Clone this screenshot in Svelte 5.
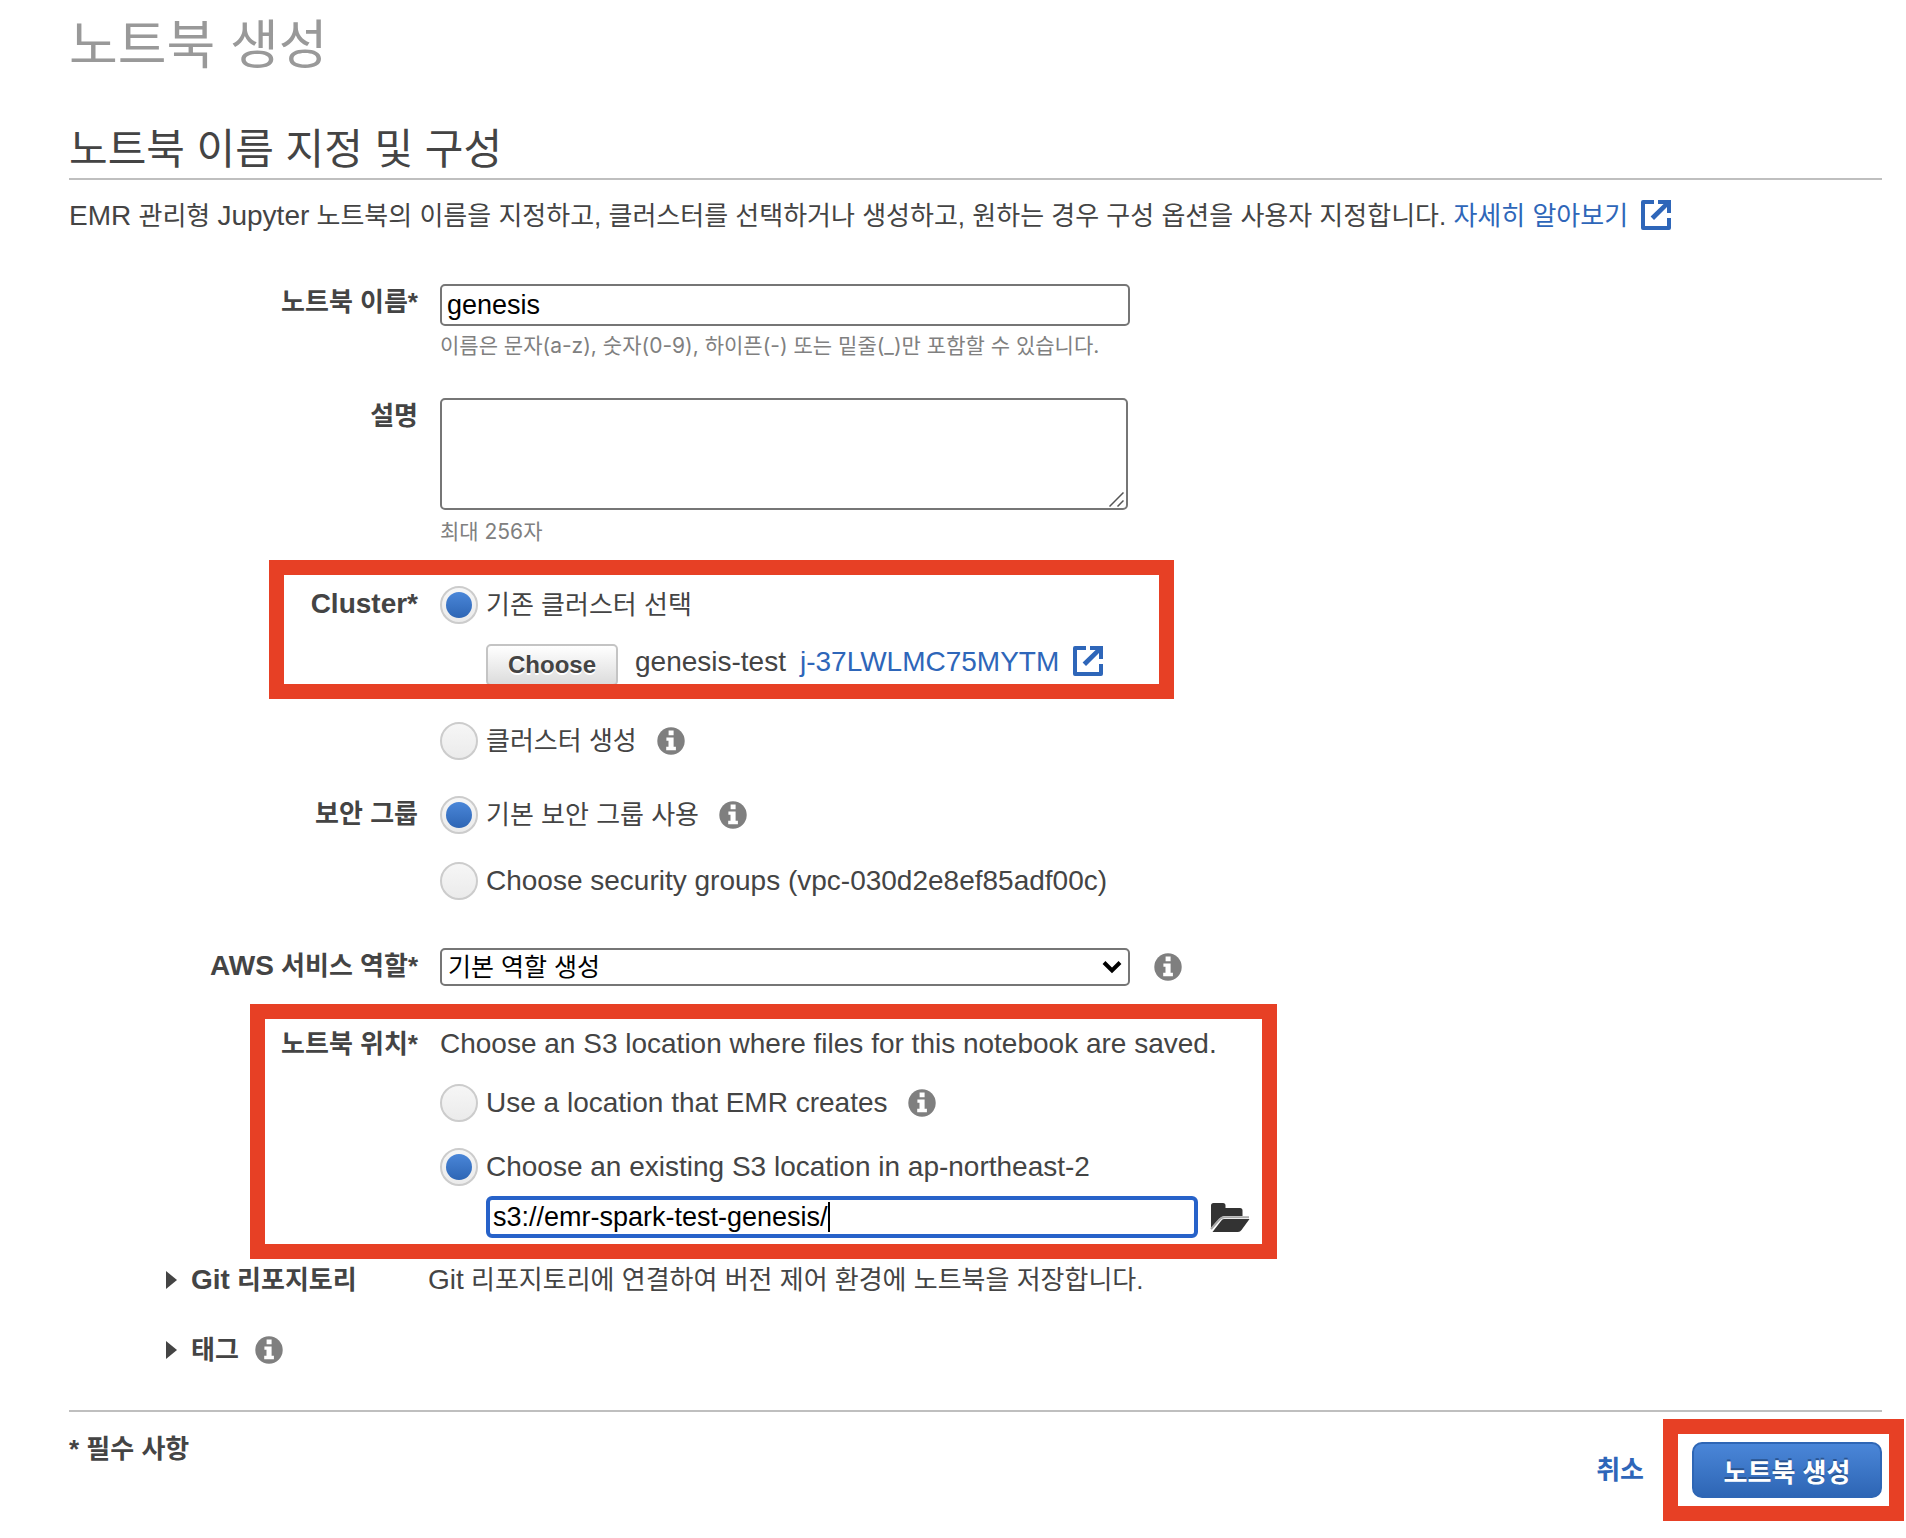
<script>
  let name = $state('genesis');
  let description = $state('');
  let cluster = $state('existing');
  let security = $state('default');
  let role = $state('default');
  let location = $state('existing');
  let s3Path = $state('s3://emr-spark-test-genesis/');
</script>

{#snippet infoIcon()}
  <svg class="info" viewBox="0 0 28 28" role="img" aria-label="정보">
    <circle cx="14" cy="14" r="13.7" fill="#7f7f7f" />
    <path d="M11.6 3.4h5v4.8h-5zM9.4 10.4h7.2v9.4h2.3v3.4H9.2v-3.4h2.3v-6H9.4z" fill="#fff" />
  </svg>
{/snippet}

{#snippet externalIcon()}
  <svg class="external" viewBox="0 0 30 30" aria-hidden="true">
    <path d="M13 2H2v26h26V18" fill="none" stroke="currentColor" stroke-width="4" stroke-linejoin="round" />
    <path d="M17 0h13v13h-4V7L13 20l-3.400-3.400L22.600 4H17z" fill="currentColor" />
  </svg>
{/snippet}

<main class="page">
  <h1>노트북 생성</h1>
  <h2>노트북 이름 지정 및 구성</h2>
  <p class="intro">
    <span class="en">EMR</span> 관리형 <span class="en">Jupyter</span> 노트북의 이름을 지정하고, 클러스터를 선택하거나 생성하고, 원하는 경우 구성 옵션을 사용자 지정합니다.
    <a href="#learn">자세히 알아보기 {@render externalIcon()}</a>
  </p>

  <form onsubmit={(e) => e.preventDefault()}>
    <div class="row name-row">
      <label class="title" for="name">노트북 이름*</label>
      <div class="field">
        <input id="name" class="text" type="text" bind:value={name} />
        <p class="hint">이름은 문자(a-z), 숫자(0-9), 하이픈(-) 또는 밑줄(_)만 포함할 수 있습니다.</p>
      </div>
    </div>

    <div class="row description-row">
      <label class="title" for="description">설명</label>
      <div class="field">
        <div class="area">
          <textarea id="description" bind:value={description}></textarea>
          <svg viewBox="0 0 15 15" aria-hidden="true">
            <path d="M0.500 14.500l14-14M8.500 14.500l6-6" fill="none" stroke="#555" stroke-width="1.500" />
          </svg>
        </div>
        <p class="hint">최대 256자</p>
      </div>
    </div>

    <div class="row cluster-row" role="radiogroup" aria-labelledby="cluster-title">
      <span class="title en" id="cluster-title">Cluster*</span>
      <div class="field">
        <label class="option"><input type="radio" value="existing" bind:group={cluster} />기존 클러스터 선택</label>
        <div class="chosen en">
          <button type="button" class="choose">Choose</button>
          <span>genesis-test</span>
          <a href="#cluster">j-37LWLMC75MYTM {@render externalIcon()}</a>
        </div>
        <label class="option"><input type="radio" value="new" bind:group={cluster} />클러스터 생성 {@render infoIcon()}</label>
      </div>
      <div class="marker cluster-marker"></div>
    </div>

    <div class="row security-row" role="radiogroup" aria-labelledby="security-title">
      <span class="title" id="security-title">보안 그룹</span>
      <div class="field">
        <label class="option"><input type="radio" value="default" bind:group={security} />기본 보안 그룹 사용 {@render infoIcon()}</label>
        <label class="option en"><input type="radio" value="custom" bind:group={security} />Choose security groups (vpc-030d2e8ef85adf00c)</label>
      </div>
    </div>

    <div class="row role-row">
      <label class="title" for="role"><span class="en">AWS</span> 서비스 역할*</label>
      <div class="field inline">
        <div class="select">
          <select id="role" bind:value={role}>
            <option value="default">기본 역할 생성</option>
          </select>
          <svg viewBox="0 0 20 14" aria-hidden="true">
            <path d="M2 2.500l8 8 8-8" fill="none" stroke="#000" stroke-width="4" />
          </svg>
        </div>
        {@render infoIcon()}
      </div>
    </div>

    <div class="row location-row" role="radiogroup" aria-labelledby="location-title">
      <span class="title" id="location-title">노트북 위치*</span>
      <div class="field">
        <p class="lead en">Choose an S3 location where files for this notebook are saved.</p>
        <label class="option en"><input type="radio" value="auto" bind:group={location} />Use a location that EMR creates {@render infoIcon()}</label>
        <label class="option en"><input type="radio" value="existing" bind:group={location} />Choose an existing S3 location in ap-northeast-2</label>
        <div class="path">
          <div class="path-box">
            <input class="text active" type="text" aria-label="S3 location" bind:value={s3Path} />
            <span class="caret"></span>
          </div>
          <button type="button" class="folder" aria-label="찾아보기">
            <svg viewBox="0 0 40 30" aria-hidden="true">
              <path d="M1 26V3.500Q1 1 3.500 1H13q2.500 0 2.500 2.500V6H30q2.500 0 2.500 2.500V14H14.500q-3 0-5 2.500z" fill="#333" />
              <path d="M1 27l8.500-9.500q2-2.300 5-2.300H39" fill="none" stroke="#aaa" stroke-width="2" />
              <path d="M14 17h25.500l-8 11q-1.300 2-3.500 2H2.500l8.500-11q1.200-2 3-2z" fill="#333" />
            </svg>
          </button>
        </div>
      </div>
      <div class="marker location-marker"></div>
    </div>

    <div class="disclosures">
      <div class="disclosure">
        <button type="button" aria-expanded="false"><i></i><span><span class="en">Git</span> 리포지토리</span></button>
        <p><span class="en">Git</span> 리포지토리에 연결하여 버전 제어 환경에 노트북을 저장합니다.</p>
      </div>
      <div class="disclosure">
        <button type="button" aria-expanded="false"><i></i><span>태그</span>{@render infoIcon()}</button>
      </div>
    </div>

    <footer>
      <strong>* 필수 사항</strong>
      <div class="actions">
        <a href="#cancel">취소</a>
        <div class="submit-wrap">
          <button type="submit" class="submit">노트북 생성</button>
          <div class="marker submit-marker"></div>
        </div>
      </div>
    </footer>
  </form>
</main>

<style>
  :global(body) {
    margin: 0;
    background: #fff;
  }
  .page,
  .page * {
    box-sizing: border-box;
  }
  .page {
    padding: 18px 24px 40px 69px;
    font: 26px/36px 'Liberation Sans', 'Noto Sans CJK KR', sans-serif;
    color: #444;
  }
  h1,
  h2,
  p {
    margin: 0;
    font-weight: 400;
  }
  h1 {
    font-size: 53px;
    line-height: 56px;
    color: #999;
  }
  h2 {
    margin-top: 52px;
    padding-bottom: 4px;
    border-bottom: 2px solid #bfbfbf;
    font-size: 42px;
    line-height: 48px;
  }
  .intro {
    margin-top: 18px;
  }
  a {
    color: #2e66b9;
    text-decoration: none;
  }
  .en {
    font-size: 28px;
  }
  button,
  input,
  select,
  textarea {
    margin: 0;
    font-family: inherit;
  }
  svg {
    display: block;
    flex: none;
  }
  .info {
    width: 28px;
    height: 28px;
    margin-left: 12px;
  }
  .external {
    display: inline-block;
    width: 30px;
    height: 30px;
    margin-left: 6px;
    vertical-align: -5px;
  }

  form {
    margin-top: 50px;
  }
  .row {
    position: relative;
    display: grid;
    grid-template-columns: 349px minmax(0, 1fr);
    column-gap: 22px;
  }
  .title {
    font-weight: 700;
    text-align: right;
  }
  .description-row {
    margin-top: 32px;
  }
  .cluster-row {
    margin-top: 34px;
  }
  .security-row {
    margin-top: 36px;
  }
  .role-row {
    margin-top: 48px;
  }
  .location-row {
    margin-top: 40px;
  }

  .text {
    display: block;
    width: 100%;
    max-width: 690px;
    height: 42px;
    padding: 0 5px;
    border: 2px solid #767676;
    border-radius: 5px;
    background: #fff;
    color: #000;
    font-size: 27px;
    outline: none;
  }
  .area {
    position: relative;
    width: fit-content;
    max-width: 100%;
    margin-bottom: 2px;
  }
  textarea {
    display: block;
    width: 688px;
    max-width: 100%;
    height: 112px;
    padding: 4px;
    border: 2px solid #767676;
    border-radius: 5px;
    font-size: 27px;
    resize: both;
  }
  textarea::-webkit-resizer {
    background: transparent;
  }
  .area svg {
    position: absolute;
    right: 4px;
    bottom: 3px;
    width: 15px;
    height: 15px;
    pointer-events: none;
  }
  .hint {
    font-family: Inter, 'Noto Sans CJK KR', sans-serif;
    font-size: 21px;
    line-height: 40px;
    color: #808080;
  }

  .option {
    display: flex;
    align-items: center;
    gap: 8px;
    width: fit-content;
    min-height: 38px;
  }
  .option + .option {
    margin-top: 28px;
  }
  .option input {
    appearance: none;
    flex: none;
    width: 38px;
    height: 38px;
    border: 2px solid #ccc;
    border-radius: 50%;
    background: linear-gradient(#f6f6f6, #ebebeb);
  }
  .option input:checked::before {
    content: '';
    display: block;
    width: 26px;
    height: 26px;
    margin: 4px;
    border-radius: 50%;
    background: linear-gradient(#4a86d8, #2e66b5);
  }
  .chosen {
    display: flex;
    align-items: flex-start;
    margin: 20px 0 36px 46px;
    height: 42px;
  }
  .chosen a {
    margin-left: 14px;
  }
  .choose {
    width: 132px;
    height: 42px;
    margin-right: 17px;
    padding: 0;
    border: 2px solid #c4c4c4;
    border-radius: 5px;
    background: linear-gradient(#fff, #dcdcdc);
    color: #444;
    font-size: 24px;
    font-weight: 700;
    text-shadow: 0 2px 0 #fff;
  }

  .inline {
    display: flex;
    align-items: center;
    gap: 12px;
  }
  .select {
    position: relative;
    width: 690px;
  }
  select {
    appearance: none;
    display: block;
    width: 100%;
    height: 38px;
    padding: 0 40px 0 6px;
    border: 2px solid #767676;
    border-radius: 5px;
    background: #fff;
    color: #000;
    font-size: 25px;
  }
  .select svg {
    position: absolute;
    top: 12px;
    right: 8px;
    width: 20px;
    height: 14px;
    pointer-events: none;
  }

  .lead {
    margin-bottom: 22px;
  }
  .location-row .option + .option {
    margin-top: 26px;
  }
  .path {
    display: flex;
    align-items: center;
    gap: 12px;
    margin: 10px 0 0 46px;
  }
  .path-box {
    position: relative;
    width: 712px;
  }
  .path .text {
    max-width: none;
    padding: 0 3px;
    border: 4px solid #2762c9;
    border-radius: 6px;
  }
  .caret {
    position: absolute;
    top: 6px;
    left: 342px;
    width: 2px;
    height: 30px;
    background: #000;
  }
  .folder {
    padding: 0;
    border: 0;
    background: none;
  }
  .folder svg {
    width: 40px;
    height: 30px;
  }

  .disclosures {
    display: grid;
    row-gap: 34px;
    margin: 24px 0 42px 97px;
  }
  .disclosure {
    display: grid;
    grid-template-columns: 262px minmax(0, 1fr);
  }
  .disclosure button {
    display: flex;
    align-items: center;
    padding: 0;
    border: 0;
    background: none;
    color: inherit;
    font-size: 26px;
    font-weight: 700;
    line-height: 36px;
  }
  .disclosure i {
    margin-right: 14px;
    border: solid transparent;
    border-width: 9px 0 9px 11px;
    border-left-color: #444;
  }
  .disclosure .info {
    margin-left: 16px;
  }

  footer {
    display: flex;
    justify-content: space-between;
    padding-top: 19px;
    border-top: 2px solid #bfbfbf;
  }
  .actions {
    display: flex;
    align-items: center;
    gap: 48px;
    margin-top: 11px;
  }
  .actions a {
    font-weight: 700;
  }
  .submit-wrap {
    position: relative;
  }
  .submit {
    display: block;
    width: 190px;
    height: 56px;
    padding: 0;
    border: 2px solid #2e66b5;
    border-radius: 10px;
    background: linear-gradient(#4a86d8, #2e66b5);
    color: #fff;
    font-size: 26px;
    font-weight: 700;
    text-shadow: 0 -2px 0 #2a5592;
  }

  /* Red callout frames laid over the form */
  .marker {
    position: absolute;
    border: 15px solid #e74025;
    pointer-events: none;
  }
  .cluster-marker {
    top: -26px;
    left: 200px;
    width: 905px;
    height: 139px;
  }
  .location-marker {
    top: -22px;
    left: 181px;
    width: 1027px;
    height: 255px;
  }
  .submit-marker {
    inset: -23px -22px -23px -29px;
  }
</style>
